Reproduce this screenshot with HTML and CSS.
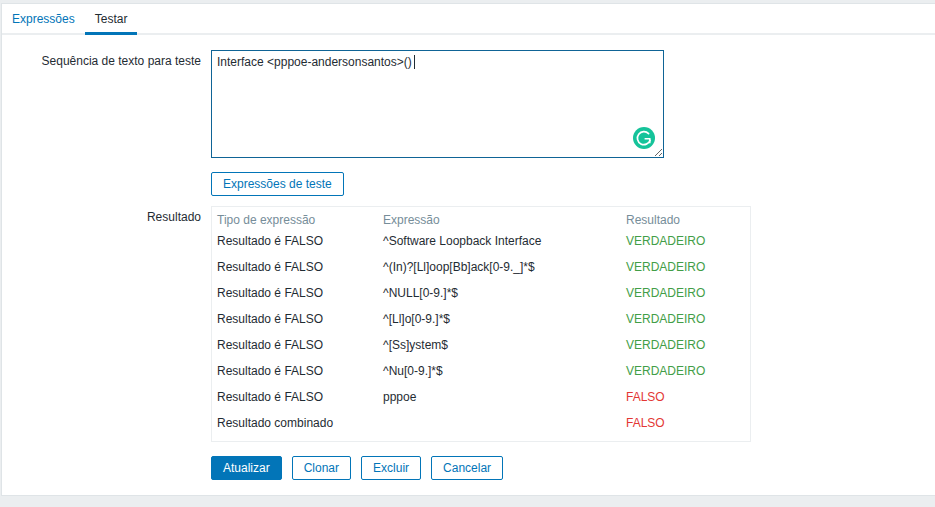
FILE: index.html
```html
<!DOCTYPE html>
<html lang="pt-BR">
<head>
<meta charset="utf-8">
<title>Testar</title>
<link rel="stylesheet" href="styles.css">
</head>
<body>
<main class="panel">
  <nav class="tabs">
    <a class="tab">Expressões</a>
    <a class="tab tab-active">Testar</a>
  </nav>
  <form class="form">
    <div class="row">
      <label class="label" for="txt">Sequência de texto para teste</label>
      <div class="field">
        <div class="area-wrap">
          <textarea id="txt" class="area" spellcheck="false">Interface &lt;pppoe-andersonsantos&gt;()</textarea>
          <span class="caret"></span>
          <svg class="grammarly" width="22" height="22" viewBox="0 0 22 22" aria-hidden="true">
            <circle cx="11" cy="11" r="11" fill="#15c39a"/>
            <path d="M15.6 6.6A6.5 6.5 0 1 0 17.1 13.2" fill="none" stroke="#fff" stroke-width="1.7" stroke-linecap="round"/>
            <path d="M11.6 11.8H16.8V16.2" fill="none" stroke="#fff" stroke-width="1.5"/>
          </svg>
        </div>
        <button type="button" class="btn btn-test">Expressões de teste</button>
      </div>
    </div>
    <div class="row row-result">
      <div class="label">Resultado</div>
      <div class="field">
        <div class="results-box">
          <table class="results">
            <thead>
              <tr><th class="c1">Tipo de expressão</th><th class="c2">Expressão</th><th>Resultado</th></tr>
            </thead>
            <tbody>
              <tr><td>Resultado é FALSO</td><td>^Software Loopback Interface</td><td class="ok">VERDADEIRO</td></tr>
              <tr><td>Resultado é FALSO</td><td>^(In)?[Ll]oop[Bb]ack[0-9._]*$</td><td class="ok">VERDADEIRO</td></tr>
              <tr><td>Resultado é FALSO</td><td>^NULL[0-9.]*$</td><td class="ok">VERDADEIRO</td></tr>
              <tr><td>Resultado é FALSO</td><td>^[Ll]o[0-9.]*$</td><td class="ok">VERDADEIRO</td></tr>
              <tr><td>Resultado é FALSO</td><td>^[Ss]ystem$</td><td class="ok">VERDADEIRO</td></tr>
              <tr><td>Resultado é FALSO</td><td>^Nu[0-9.]*$</td><td class="ok">VERDADEIRO</td></tr>
              <tr><td>Resultado é FALSO</td><td>pppoe</td><td class="bad">FALSO</td></tr>
              <tr><td>Resultado combinado</td><td></td><td class="bad">FALSO</td></tr>
            </tbody>
          </table>
        </div>
        <div class="actions">
          <button type="button" class="btn btn-primary">Atualizar</button>
          <button type="button" class="btn">Clonar</button>
          <button type="button" class="btn">Excluir</button>
          <button type="button" class="btn">Cancelar</button>
        </div>
      </div>
    </div>
  </form>
</main>
</body>
</html>
```

FILE: styles.css
```css
* { box-sizing: border-box; }
html, body { height: 100%; }
body {
  margin: 0;
  padding: 3px 0 0 1px;
  background: #ebeef0;
  font: 12px/14px "Liberation Sans", Arial, sans-serif;
  color: #1f2c33;
  overflow: hidden;
}
.panel {
  height: 493px;
  background: #fff;
  border: 1px solid #dfe4e7;
  border-right: 0;
}
.tabs {
  display: flex;
  height: 31px;
  border-bottom: 2px solid #ebeef0;
}
.tab {
  height: 31px;
  padding: 8px 10px 0;
  color: #0275b8;
}
.tab-active {
  color: #1f2c33;
  border-bottom: 3px solid #0275b8;
}
.form { padding-top: 15px; }
.row { display: flex; }
.row-result { margin-top: 10px; }
.label {
  width: 199px;
  padding-top: 4px;
  text-align: right;
  flex: none;
}
.field { margin-left: 10px; }
.area-wrap { position: relative; width: 453px; height: 108px; }
.area {
  display: block;
  width: 453px;
  height: 108px;
  margin: 0;
  padding: 4px 5px;
  border: 1px solid #0f6496;
  border-radius: 0;
  outline: 0;
  background: #fff;
  color: #1f2c33;
  font: inherit;
  resize: both;
}
.caret {
  position: absolute;
  left: 203px;
  top: 5px;
  width: 1px;
  height: 14px;
  background: #1f2c33;
}
.grammarly { position: absolute; left: 422px; top: 77px; }
.btn {
  height: 24px;
  padding: 0 11px;
  border: 1px solid #0275b8;
  border-radius: 2px;
  background: #fff;
  color: #0275b8;
  font: inherit;
}
.btn-test { display: block; margin-top: 14px; }
.btn-primary { background: #0275b8; color: #fff; }
.results-box {
  width: 540px;
  height: 236px;
  border: 1px solid #ebeef0;
  padding-bottom: 5px;
}
.results {
  width: 538px;
  border-collapse: collapse;
  table-layout: fixed;
}
.results th, .results td {
  height: 26px;
  padding: 0 0 0 5px;
  text-align: left;
  font-weight: 400;
  white-space: nowrap;
}
.results th { height: 21px; color: #768d99; padding-top: 5px; }
.c1 { width: 166px; }
.c2 { width: 243px; }
.ok { color: #429e47; }
.bad { color: #e33734; }
.actions { display: flex; gap: 10px; margin-top: 14px; }
```
